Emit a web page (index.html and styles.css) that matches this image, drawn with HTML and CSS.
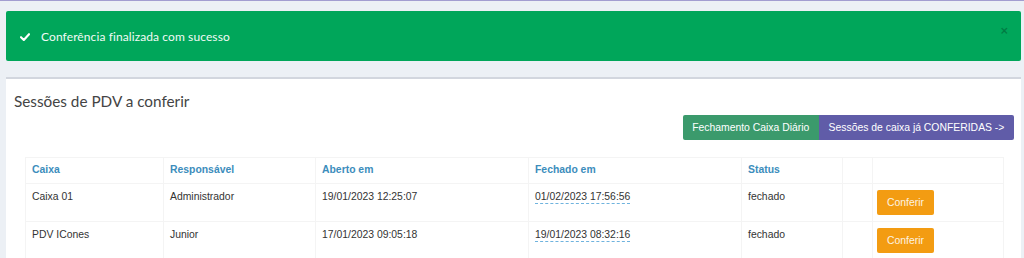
FILE: index.html
```html
<!DOCTYPE html>
<html lang="pt-BR">
<head>
<meta charset="utf-8">
<title>Sessões de PDV a conferir</title>
<link rel="stylesheet" href="styles.css">
</head>
<body>
<div class="topbar"></div>
<main class="content">
  <div class="alert">
    <svg class="alert-icon" viewBox="0 0 10 8" width="10" height="8"><path d="M1 4.2 L3.8 7 L9 1.2" fill="none" stroke="#fff" stroke-width="2.1" stroke-linecap="round" stroke-linejoin="round"/></svg>
    <span class="alert-text">Conferência finalizada com sucesso</span>
    <span class="alert-close">×</span>
  </div>

  <section class="box">
    <h3 class="box-title">Sessões de PDV a conferir</h3>
    <div class="actions">
      <a class="btn btn-green">Fechamento Caixa Diário</a><a class="btn btn-purple">Sessões de caixa já CONFERIDAS -&gt;</a>
    </div>
    <table class="grid">
      <colgroup>
        <col class="c1"><col class="c2"><col class="c3"><col class="c4"><col class="c5"><col class="c6"><col class="c7">
      </colgroup>
      <thead>
        <tr><th>Caixa</th><th>Responsável</th><th>Aberto em</th><th>Fechado em</th><th>Status</th><th></th><th></th></tr>
      </thead>
      <tbody>
        <tr>
          <td>Caixa 01</td><td>Administrador</td><td>19/01/2023 12:25:07</td>
          <td><span class="editable">01/02/2023 17:56:56</span></td><td>fechado</td><td></td>
          <td class="act"><a class="btn btn-orange">Conferir</a></td>
        </tr>
        <tr>
          <td>PDV ICones</td><td>Junior</td><td>17/01/2023 09:05:18</td>
          <td><span class="editable">19/01/2023 08:32:16</span></td><td>fechado</td><td></td>
          <td class="act"><a class="btn btn-orange">Conferir</a></td>
        </tr>
      </tbody>
    </table>
  </section>
</main>
</body>
</html>
```

FILE: styles.css
```css
html, body {
  margin: 0;
  padding: 0;
  background: #ecf0f5;
  height: 258px;
  overflow: hidden;
}
.topbar {
  height: 1px;
  background: #a29dd0;
}
.content {
  padding: 10px 3px 0 6px;
}
.alert {
  position: relative;
  display: flex;
  align-items: center;
  height: 50px;
  box-sizing: border-box;
  padding: 0 12px 0 14px;
  background: #00a65a;
  border-radius: 2px;
  color: #f2fbf6;
  font-family: Lato, "Open Sans", sans-serif;
  font-size: 12px;
}
.alert-icon {
  margin-right: 11px;
  margin-top: 1px;
}
.alert-text {
  letter-spacing: 0.1px;
}
.alert-close {
  position: absolute;
  right: 13px;
  top: 12px;
  color: rgba(0, 0, 0, 0.25);
  font-family: "Liberation Sans", sans-serif;
  font-weight: bold;
  font-size: 13px;
}
.box {
  margin-top: 16px;
  background: #fff;
  border-top: 2px solid #d2d6de;
  padding: 0 7px 0 8px;
  height: 181px;
}
.box-title {
  margin: 0;
  padding-top: 13px;
  font-family: Lato, "Open Sans", sans-serif;
  font-weight: normal;
  font-size: 15.3px;
  color: #444;
  line-height: 18px;
}
.actions {
  display: flex;
  justify-content: flex-end;
  margin-top: 5px;
}
.btn {
  display: inline-block;
  font-family: "Liberation Sans", Arial, sans-serif;
  font-size: 10.4px;
  color: #fff;
  line-height: 25px;
  height: 25px;
  box-sizing: border-box;
  padding: 0 9.6px;
  cursor: pointer;
}
.btn-green {
  background: #3b9a6c;
  border-radius: 2px 0 0 2px;
}
.btn-purple {
  background: #605ca8;
  border-radius: 0 2px 2px 0;
}
.grid {
  margin: 17px 0 0 11px;
  width: 978px;
  border-collapse: collapse;
  table-layout: fixed;
  font-family: "Liberation Sans", Arial, sans-serif;
  font-size: 10.4px;
  color: #333;
}
.c1 { width: 138px; }
.c2 { width: 152px; }
.c3 { width: 213px; }
.c4 { width: 213px; }
.c5 { width: 101px; }
.c6 { width: 30px; }
.c7 { width: 131px; }
.grid th, .grid td {
  border: 1px solid #f4f4f4;
  text-align: left;
  vertical-align: top;
  padding: 6px 6px;
}
.grid th {
  color: #3c8dbc;
  font-weight: bold;
  height: 13px;
}
.grid td {
  height: 24px;
  padding-top: 7px;
}
.grid td.act {
  padding-top: 6px;
  padding-left: 4px;
}
.editable {
  border-bottom: 1px dashed #6fb3de;
  padding-bottom: 1px;
}
.btn-orange {
  background: #f39c12;
  border-radius: 2px;
  padding: 0 10px;
  color: #fdf3e3;
}
```
